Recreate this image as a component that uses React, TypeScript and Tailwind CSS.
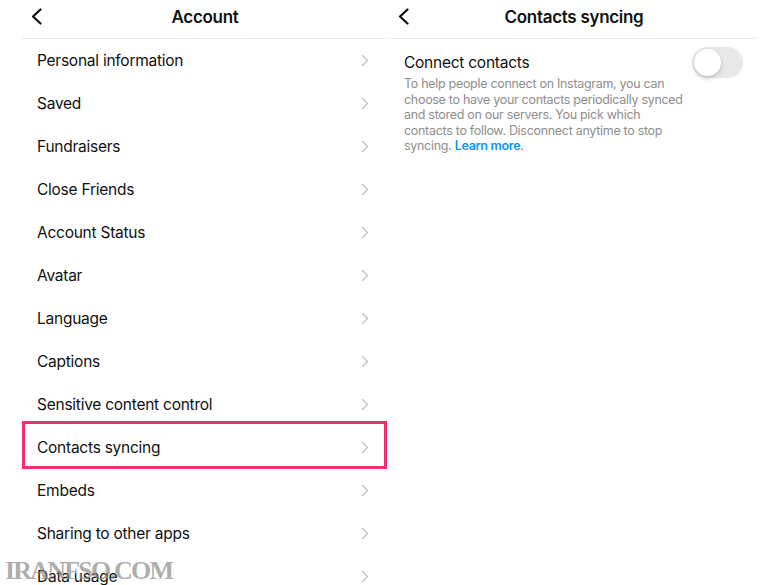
import type { ReactNode } from "react";

const accountItems = [
  "Personal information",
  "Saved",
  "Fundraisers",
  "Close Friends",
  "Account Status",
  "Avatar",
  "Language",
  "Captions",
  "Sensitive content control",
  "Contacts syncing",
  "Embeds",
  "Sharing to other apps",
  "Data usage"
];

const highlighted = "Contacts syncing";

function BackArrow() {
  return (
    <svg width="13" height="17" viewBox="0 0 13 17" fill="none">
      <path
        d="M10.5 1.5 L3 8.5 L10.5 15.5"
        stroke="#111"
        strokeWidth="2.2"
        strokeLinecap="round"
        strokeLinejoin="round"
      />
    </svg>
  );
}

function Chevron() {
  return (
    <svg width="8" height="13" viewBox="0 0 8 13" fill="none">
      <path
        d="M1.5 1.5 L6.5 6.5 L1.5 11.5"
        stroke="#c3c3c6"
        strokeWidth="1.4"
        strokeLinecap="round"
        strokeLinejoin="round"
      />
    </svg>
  );
}

function Header({ title, arrowOffset, children }: { title: string; arrowOffset: string; children?: ReactNode }) {
  return (
    <div className="relative flex h-[39px] items-center justify-center border-b border-[#ececec]">
      <span className={`absolute top-[8px] ${arrowOffset}`}>
        <BackArrow />
      </span>
      <h1 className="pb-[3px] text-[17px] font-semibold tracking-[-0.3px] text-[#111]">{title}</h1>
      {children}
    </div>
  );
}

function AccountRow({ label }: { label: string }) {
  return (
    <div className="relative flex h-[43px] items-center justify-between pl-[15px] pr-[19px]">
      <span className="text-[15.5px] tracking-[-0.25px] text-[#111]">{label}</span>
      <Chevron />
      {label === highlighted ? (
        <span className="pointer-events-none absolute -top-[5px] bottom-0 left-0 right-[1px] border-[3px] border-[#f2306d]" />
      ) : null}
    </div>
  );
}

export default function App() {
  return (
    <div
      className="relative flex h-[585px] w-[780px] overflow-hidden bg-white"
      style={{ fontFamily: "Inter, 'Noto Sans', sans-serif" }}
    >
      <section className="ml-[22px] w-[366px]">
        <Header title="Account" arrowOffset="left-[8px]" />
        <div className="flex flex-col">
          {accountItems.map((item) => (
            <AccountRow key={item} label={item} />
          ))}
        </div>
      </section>

      <section className="ml-[2px] w-[368px]">
        <Header title="Contacts syncing" arrowOffset="left-[7px]" />
        <div className="flex items-start justify-between pl-[14px] pr-[15px] pt-[14px]">
          <div className="w-[285px]">
            <p className="text-[15.5px] leading-[20px] tracking-[-0.25px] text-[#111]">Connect contacts</p>
            <p className="mt-[3px] text-[12.5px] leading-[15.5px] tracking-[-0.3px] text-[#8e8e8e]">
              To help people connect on Instagram, you can choose to have your contacts periodically synced
              and stored on our servers. You pick which contacts to follow. Disconnect anytime to stop
              syncing. <span className="font-semibold text-[#0a95f0]">Learn more</span>.
            </p>
          </div>
          <div className="mt-[-6px] flex h-[31px] w-[51px] items-center rounded-full bg-[#e9e9eb] p-[2px]">
            <span className="h-[27px] w-[27px] rounded-full bg-white shadow-[0_2px_5px_rgba(0,0,0,0.2)]" />
          </div>
        </div>
      </section>

      <span
        className="pointer-events-none absolute bottom-[-5px] left-[5px] text-[26px] font-bold tracking-[-1.8px] text-[#8a8a8a]/70"
        style={{ fontFamily: "'Liberation Serif', serif" }}
      >
        IRANFSO.COM
      </span>
    </div>
  );
}
